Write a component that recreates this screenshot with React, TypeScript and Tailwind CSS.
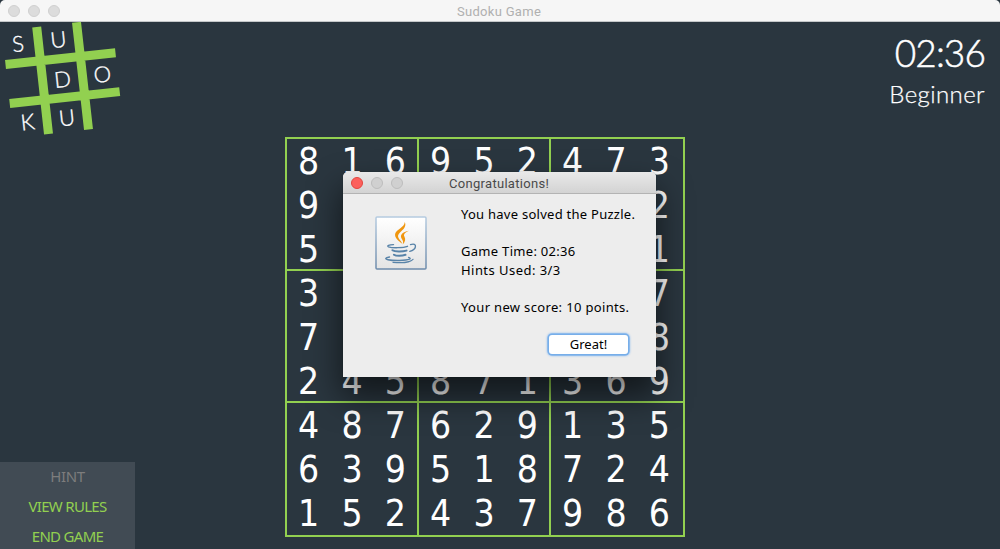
const board = [
  '816952473', '9       2', '5       1',
  '3       7', '7       8', '245871369',
  '487629135', '639518724', '152437986',
];

function Light({ className }: { className: string }) {
  return <span className={`h-3 w-3 rounded-full border ${className}`} />;
}

function Logo() {
  const letters: [string, number, number][] = [
    ['S', 18, 44], ['U', 58.3, 39.7], ['D', 62.6, 79.5],
    ['O', 102.3, 74.5], ['K', 27.7, 122], ['U', 67, 118],
  ];
  return (
    <svg width="125" height="118" viewBox="0 22 125 118" className="block">
      <g stroke="#92d050" strokeWidth="9">
        <path d="M36.7 27 48.5 134M76.5 22.3 88.5 129.6M5.5 64.5 115.5 52.8M9.7 103.5 119.7 91.6" />
      </g>
      {letters.map(([ch, x, y]) => (
        <text
          key={`${ch}${x}`}
          x={x}
          y={y + 7.7}
          transform={`rotate(-6 ${x} ${y})`}
          textAnchor="middle"
          fill="#fff"
          stroke="#fff"
          strokeWidth="0.35"
          className="font-['Lato'] text-[22px] font-light"
        >
          {ch}
        </text>
      ))}
    </svg>
  );
}

function JavaIcon() {
  return (
    <svg width="52" height="54" viewBox="375 216 52 54" className="block">
      <defs>
        <linearGradient id="face" x1="0" y1="0" x2="0" y2="1">
          <stop offset="0" stopColor="#ffffff" />
          <stop offset="1" stopColor="#e4e4e4" />
        </linearGradient>
        <linearGradient id="edge" x1="0" y1="0" x2="0" y2="1">
          <stop offset="0" stopColor="#b5cbe0" />
          <stop offset="1" stopColor="#6d8bab" />
        </linearGradient>
      </defs>
      <rect x="376" y="217" width="50" height="52" rx="1" fill="url(#face)" stroke="url(#edge)" strokeWidth="1.5" />
      <g fill="#f0960f">
        <path d="M404.800 222c2 4.600-1.700 7.600-5 10.700-2.700 2.600-1.900 4.700.3 7.600 1 1.300 1.700 2.300 2.200 3.500-3.800-2.700-7.800-6-7.200-9.700.8-4.600 9.300-6.400 9.700-12.100z" />
        <path d="M409 230.800c-4.800 2-5.600 3.800-4.500 6 1.300 2.500.8 5-1.800 7.600.9-2.600.2-3.900-1-5.700-2.300-3.600.8-6.700 7.300-7.900z" />
      </g>
      <g fill="none" stroke="#5883a8" strokeLinecap="round">
        <path d="M393.500 244.600c-4.500.3-7 1.300-5 2.200 4 1.400 14.800 1.100 19-.5" strokeWidth="1.400" />
        <path d="M410.500 244.600c3.300-1.200 5.400-.2 4.900 2.200-.4 2.100-2.700 3.700-5.600 4.500" strokeWidth="1.400" />
        <path d="M392.500 250.200c2.200 1.600 10 1.500 14 .4M394 254.700c2 1.500 8 1.400 11.500.1" strokeWidth="2" />
        <path d="M389.500 257c-4.300.6-5 1.900-1.500 2.700 5.800 1.300 17.800 1 21.500-.5 1.200-.6.6-1.400-.9-1.800" strokeWidth="1.400" />
        <path d="M393 262.300c7.500.8 17 .2 20-3" strokeWidth="1.200" />
      </g>
    </svg>
  );
}

function Dialog() {
  return (
    <section className="absolute left-[343px] top-[172px] flex h-[205px] w-[313px] flex-col overflow-visible rounded-t-[5px] bg-[#ededed] shadow-[0_18px_32px_2px_rgba(0,0,0,0.55),0_0_1px_rgba(0,0,0,0.5)]">
      <header className="grid h-[22px] shrink-0 grid-cols-[106px_1fr] items-center rounded-t-[5px] border-b border-[#b3b3b3] bg-linear-to-b from-[#e9e9e9] to-[#d3d3d3]">
        <div className="flex gap-2 pl-2">
          <Light className="border-[#e2463f] bg-[#fc605c]" />
          <Light className="border-[#bdbdbd] bg-[#d0d0d0]" />
          <Light className="border-[#bdbdbd] bg-[#d0d0d0]" />
        </div>
        <h2 className="whitespace-nowrap pt-0.5 font-['Roboto',sans-serif] text-[13px] leading-[18px] tracking-[0.3px] text-[#4a4a4a]">Congratulations!</h2>
      </header>
      <div className="flex flex-1 pl-8">
        <div className="w-[86px] shrink-0 pt-[22px]">
          <JavaIcon />
        </div>
        <div className="whitespace-nowrap pt-[11px] font-['Noto_Sans',sans-serif] text-[13px] leading-[18.6px] text-black">
          <p className="tracking-[0.26px]">You have solved the Puzzle.</p>
          <p className="mt-[18.6px] tracking-[0.3px]">Game Time: 02:36</p>
          <p className="tracking-[0.45px]">Hints Used: 3/3</p>
          <p className="mt-[18.6px] tracking-[0.34px]">Your new score: 10 points.</p>
          <button className="ml-[88px] mt-[18px] flex h-[19px] w-[79px] items-center justify-center rounded-[3px] bg-white text-[13px] shadow-[0_0_0_1.5px_#77aee9,0_0_2px_2px_#8fbdf0]">
            Great!
          </button>
        </div>
      </div>
    </section>
  );
}

function Board() {
  return (
    <div className="grid h-[400px] w-[400px] grid-cols-[132px_132px_132px] grid-rows-[132px_132px_132px] border-2 border-[#92d050]">
      {Array.from({ length: 9 }, (_, b) => {
        const r = Math.floor(b / 3) * 3;
        const c = (b % 3) * 3;
        return (
          <div
            key={b}
            className={`grid grid-cols-3 grid-rows-[44px_44px_44px] border-[#92d050] ${c < 6 ? 'border-r-2' : 'pr-0.5'} ${r < 6 ? 'border-b-2' : ''}`}
          >
            {Array.from({ length: 9 }, (_, i) => {
              const digit = board[r + Math.floor(i / 3)][c + (i % 3)];
              return (
                <span key={i} className="flex items-center justify-center font-['DejaVu_Sans_Condensed','DejaVu_Sans',sans-serif] text-[37px] leading-none text-white">
                  {digit}
                </span>
              );
            })}
          </div>
        );
      })}
    </div>
  );
}

export default function App() {
  return (
    <div className="relative flex h-[549px] w-[1000px] flex-col overflow-hidden bg-[#2a363f]">
      <header className="grid h-[22px] shrink-0 grid-cols-[457px_1fr] items-center rounded-t-[5px] border-b border-[#c4c7c9] bg-[#f6f6f6]">
        <div className="flex gap-2 pl-2">
          <Light className="border-[#d0d0d0] bg-[#dcdcdc]" />
          <Light className="border-[#d0d0d0] bg-[#dcdcdc]" />
          <Light className="border-[#d0d0d0] bg-[#dcdcdc]" />
        </div>
        <h1 className="whitespace-nowrap pt-0.5 font-['Roboto',sans-serif] text-[13px] leading-[18px] tracking-[0.3px] text-[#b0b0b0]">Sudoku Game</h1>
      </header>
      <main className="grid flex-1 grid-cols-[285px_400px_315px]">
        <aside className="flex flex-col justify-between">
          <Logo />
          <nav className="flex h-[87px] w-[135px] flex-col bg-[#414b54] font-['Noto_Sans',sans-serif] text-[15px] tracking-[-0.7px] text-[#92d050]">
            <button className="h-[30px] shrink-0 pb-0.5 tracking-[-0.3px] text-[#7d7d7d]">HINT</button>
            <button className="h-[30px] shrink-0 pb-0.5">VIEW RULES</button>
            <button className="h-[30px] shrink-0 pb-0.5">END GAME</button>
          </nav>
        </aside>
        <div className="pt-[115px]">
          <Board />
        </div>
        <aside className="flex flex-col items-end pr-[15px] pt-[10px] font-['Lato',sans-serif] font-light text-white">
          <time className="text-[37px] leading-[41px] tracking-[-0.9px] [-webkit-text-stroke:0.5px_white]">02:36</time>
          <p className="mt-[6px] text-[24px] leading-[30px] tracking-[0.4px] [-webkit-text-stroke:0.25px_white]">Beginner</p>
        </aside>
      </main>
      <Dialog />
    </div>
  );
}
